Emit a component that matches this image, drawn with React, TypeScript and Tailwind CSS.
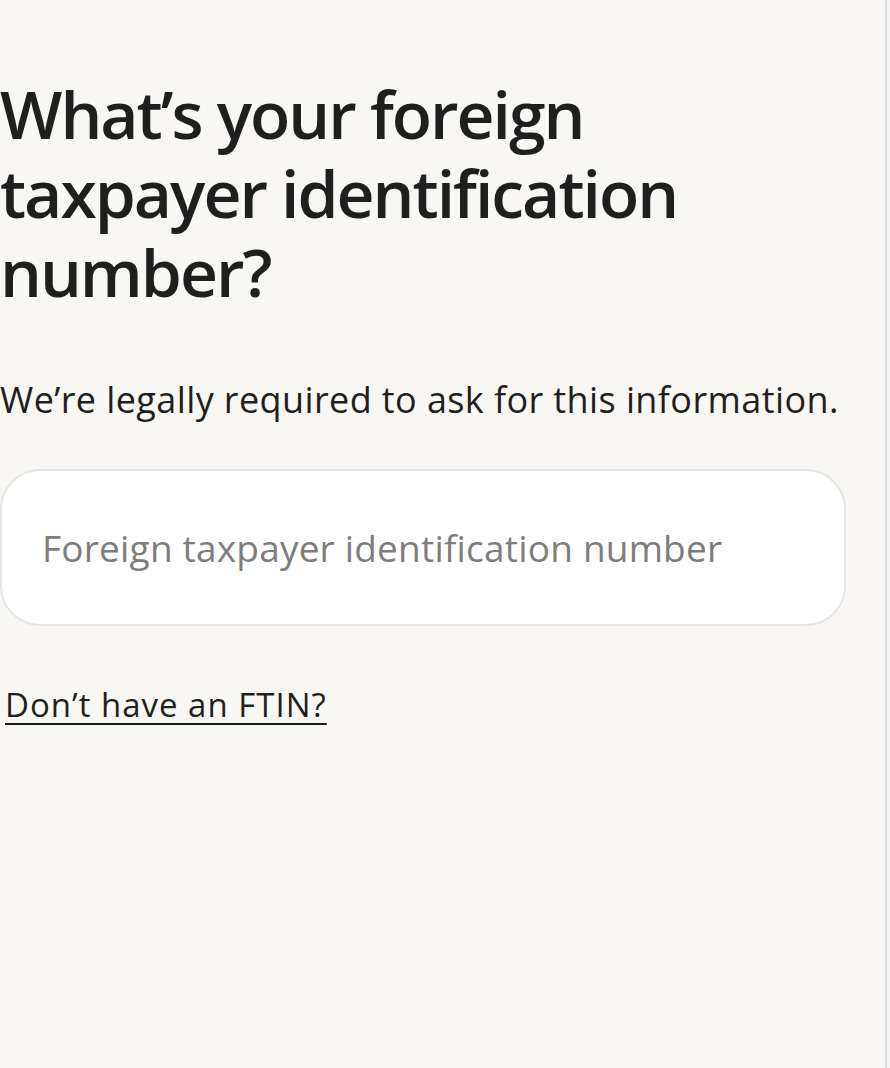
import React, { useState } from 'react';

export default function App() {
    const [ftin, setFtin] = useState('');

    return (
        <div className="flex min-h-[1068px] w-full bg-[#f8f7f4]" style={{ fontFamily: '"Open Sans", "Noto Sans", sans-serif' }}>
            <main className="flex-1 pt-[74px] pr-[39px]">
                <h1 className="max-w-[720px] text-[66px] leading-[79px] font-semibold text-[#1f1f1f] tracking-[-2px]">
                    What’s your foreign taxpayer identification number?
                </h1>
                <p className="mt-[66px] text-[36px] leading-[46px] text-[#1f1f1f] tracking-[0.4px]">
                    We’re legally required to ask for this information.
                </p>

                {/* FTIN input */}
                <input
                    type="text"
                    value={ftin}
                    onChange={(e) => setFtin(e.target.value)}
                    placeholder="Foreign taxpayer identification number"
                    className="mt-[46px] block w-full h-[157px] px-[40px] bg-white border-2 border-[#e6e5e2] rounded-[40px] text-[37px] tracking-[0.2px] text-[#1f1f1f] placeholder:text-[#7d7d7d] outline-none"
                />

                <button type="button" className="mt-[58px] ml-[5px] text-[33px] leading-[42px] font-medium tracking-[1px] text-[#1f1f1f] underline underline-offset-[6px] decoration-2">
                    Don’t have an FTIN?
                </button>
            </main>
            {/* right edge gutter */}
            <div className="w-[5px] shrink-0 border-l-2 border-[#dcdcdc] bg-[#f4f4f4]" />
        </div>
    );
}
